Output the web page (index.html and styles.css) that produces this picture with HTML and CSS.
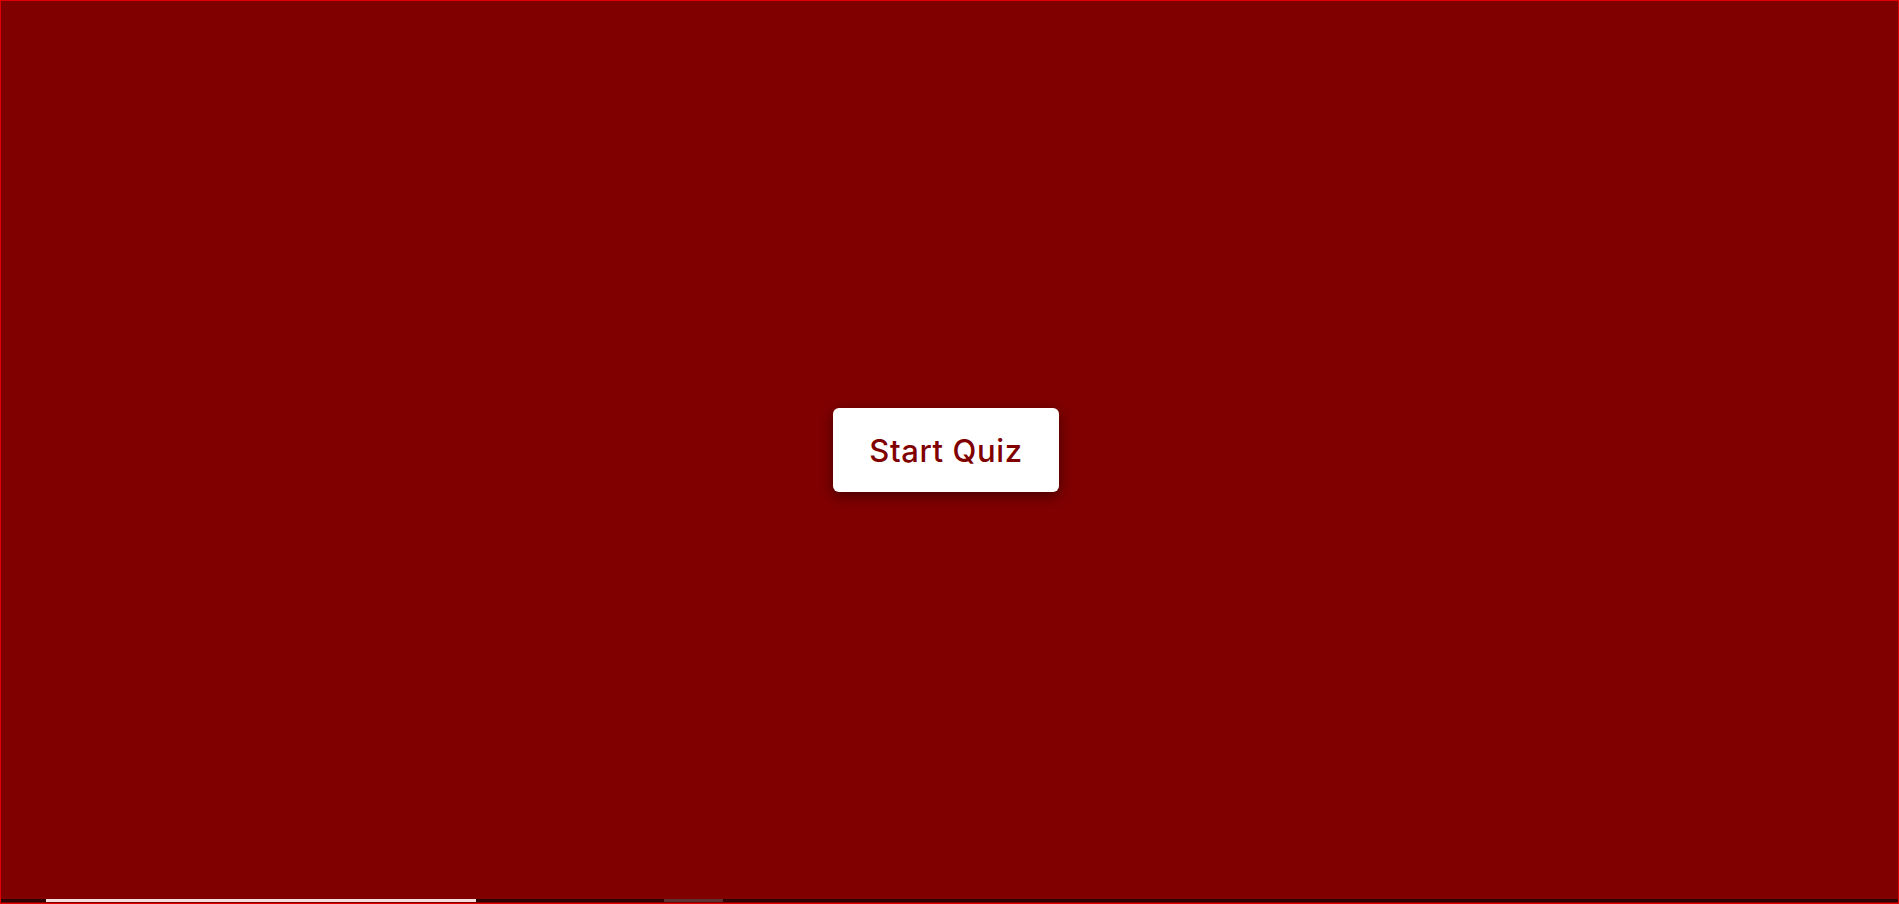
FILE: index.html
```html
<!DOCTYPE html>
<html lang="en">
<head>
<meta charset="utf-8">
<title>Quiz</title>
<link rel="stylesheet" href="styles.css">
</head>
<body>
<div class="page">
  <main class="stage">
    <button class="start-btn">Start Quiz</button>
  </main>
  <div class="track">
    <span class="gap-a"></span>
    <span class="thumb"></span>
    <span class="gap-b"></span>
    <span class="mark"></span>
  </div>
</div>
</body>
</html>
```
FILE: styles.css
```css
* { box-sizing: border-box; }
html, body { margin: 0; padding: 0; background: #800000; overflow: hidden; }
.page {
  width: 1899px;
  height: 904px;
  border: 1px solid #e00000;
  display: flex;
  flex-direction: column;
  background: #800000;
}
.stage {
  flex: 1;
  display: flex;
  align-items: center;
  justify-content: center;
  padding-right: 7px;
}
.start-btn {
  width: 226px;
  height: 84px;
  padding: 0;
  background: #ffffff;
  border: none;
  border-radius: 6px;
  color: #800000;
  font-family: "Inter", "Open Sans", sans-serif;
  font-size: 31px;
  font-weight: 500;
  letter-spacing: 0.6px;
  box-shadow: 0 4px 14px rgba(0,0,0,0.45);
  cursor: pointer;
}
.track {
  height: 3px;
  margin-bottom: 1px;
  background: #2e0404;
  display: flex;
}
.gap-a { width: 45px; }
.thumb { width: 430px; background: #f4dede; }
.gap-b { width: 188px; }
.mark { width: 59px; background: #5a3232; }
```
